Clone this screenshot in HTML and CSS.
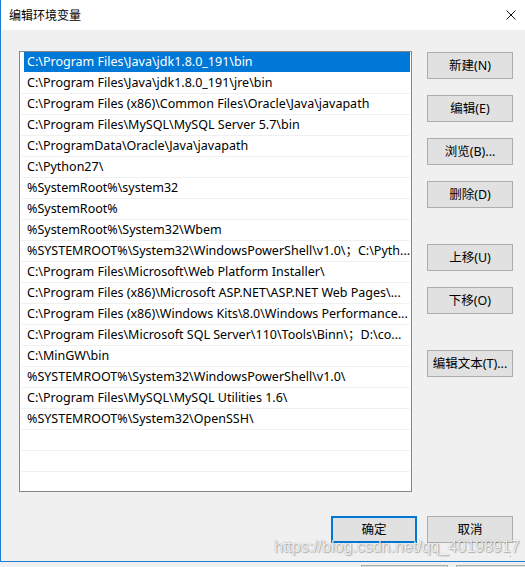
FILE: index.html
```html
<!DOCTYPE html>
<html lang="zh-CN">
<head>
<meta charset="utf-8">
<title>编辑环境变量</title>
<link rel="stylesheet" href="styles.css">
</head>
<body>
<div class="window">
  <div class="titlebar">
    <span class="title">编辑环境变量</span>
    <svg class="close" width="10" height="10" viewBox="0 0 10 10"><path d="M0.5 0.5L9.5 9.5M9.5 0.5L0.5 9.5" stroke="#111" stroke-width="1" fill="none"/></svg>
  </div>
  <div class="body">
    <div class="main">
      <div class="list">
        <div class="row sel">C:\Program Files\Java\jdk1.8.0_191\bin</div>
        <div class="row">C:\Program Files\Java\jdk1.8.0_191\jre\bin</div>
        <div class="row">C:\Program Files (x86)\Common Files\Oracle\Java\javapath</div>
        <div class="row">C:\Program Files\MySQL\MySQL Server 5.7\bin</div>
        <div class="row">C:\ProgramData\Oracle\Java\javapath</div>
        <div class="row">C:\Python27\</div>
        <div class="row">%SystemRoot%\system32</div>
        <div class="row">%SystemRoot%</div>
        <div class="row">%SystemRoot%\System32\Wbem</div>
        <div class="row">%SYSTEMROOT%\System32\WindowsPowerShell\v1.0\；C:\Pyth...</div>
        <div class="row">C:\Program Files\Microsoft\Web Platform Installer\</div>
        <div class="row">C:\Program Files (x86)\Microsoft ASP.NET\ASP.NET Web Pages\...</div>
        <div class="row">C:\Program Files (x86)\Windows Kits\8.0\Windows Performance...</div>
        <div class="row">C:\Program Files\Microsoft SQL Server\110\Tools\Binn\；D:\co...</div>
        <div class="row">C:\MinGW\bin</div>
        <div class="row">%SYSTEMROOT%\System32\WindowsPowerShell\v1.0\</div>
        <div class="row">C:\Program Files\MySQL\MySQL Utilities 1.6\</div>
        <div class="row">%SYSTEMROOT%\System32\OpenSSH\</div>
        <div class="row"></div>
        <div class="row"></div>
        <div class="row last"></div>
      </div>
      <div class="side">
        <div class="group">
          <button class="btn">新建(N)</button>
          <button class="btn">编辑(E)</button>
          <button class="btn">浏览(B)...</button>
          <button class="btn">删除(D)</button>
        </div>
        <div class="group">
          <button class="btn">上移(U)</button>
          <button class="btn">下移(O)</button>
        </div>
        <div class="group">
          <button class="btn">编辑文本(T)...</button>
        </div>
      </div>
    </div>
    <div class="footer">
      <button class="btn primary">确定</button>
      <button class="btn">取消</button>
    </div>
    <div class="watermark">https://blog.csdn.net/qq_40198917</div>
    <div class="grip"></div>
  </div>
</div>
<div class="behind">
  <div class="ghost g1"></div>
  <div class="ghost g2"></div>
</div>
</body>
</html>
```
FILE: styles.css
```css
html, body {
  margin: 0;
  padding: 0;
  background: #f0f0f0;
  overflow: hidden;
}
body {
  width: 525px;
  height: 567px;
  font-family: "Noto Sans", "Noto Sans CJK SC", sans-serif;
  font-size: 12px;
  color: #000;
}
.window {
  width: 524px;
  height: 561px;
  border-left: 1px solid #1a7fd4;
  border-bottom: 1px solid #1a7fd4;
  display: flex;
  flex-direction: column;
}
.titlebar {
  height: 30px;
  background: #fff;
  display: flex;
  align-items: center;
  padding-left: 8px;
  position: relative;
  box-sizing: border-box;
}
.title {
  font-family: "Noto Sans CJK SC", sans-serif;
  font-size: 12px;
  color: #000;
  line-height: 30px;
}
.close {
  position: absolute;
  left: 505px;
  top: 10px;
}
.body {
  flex: 1;
  background: #f0f0f0;
  position: relative;
  padding: 21px 0 0 18px;
  box-sizing: border-box;
}
.main {
  display: flex;
  gap: 15px;
}
.list {
  width: 390px;
  height: 439px;
  border: 1px solid #828790;
  background: #fff;
  overflow: hidden;
  padding-left: 1px;
  box-sizing: content-box;
}
.row {
  height: 20px;
  line-height: 20px;
  border-bottom: 1px solid #f0f0f0;
  margin-right: 1px;
  padding-left: 6px;
  white-space: nowrap;
  overflow: hidden;
  font-family: "Noto Sans", "Noto Sans CJK SC", sans-serif;
  font-size: 12.5px;
}
.row.sel {
  background: linear-gradient(to right, transparent 3px, #0078d7 3px);
  color: #fff;
  border-bottom-color: #fff;
}
.side {
  display: flex;
  flex-direction: column;
  gap: 36px;
  padding-top: 1px;
}
.group {
  display: flex;
  flex-direction: column;
  gap: 16px;
}
.btn {
  width: 86px;
  height: 27px;
  margin: 0;
  padding: 0;
  background: #e1e1e1;
  border: 1px solid #adadad;
  font-family: "Noto Sans", "Noto Sans CJK SC", sans-serif;
  font-size: 12.5px;
  color: #000;
  box-sizing: border-box;
  line-height: 25px;
}
.btn.primary {
  border: 2px solid #0078d7;
  line-height: 23px;
}
.footer {
  display: flex;
  gap: 10px;
  margin-top: 24px;
  margin-left: 312px;
}
.watermark {
  position: absolute;
  left: 273px;
  top: 508px;
  font-family: "Liberation Sans", Arial, sans-serif;
  font-size: 16px;
  color: rgba(255, 255, 255, 0.85);
  text-shadow: 0 0 1px rgba(0, 0, 0, 0.35), 1px 1px 1px rgba(0, 0, 0, 0.25);
  white-space: nowrap;
}
.grip {
  position: absolute;
  right: 12px;
  bottom: 2px;
  width: 7px;
  height: 7px;
  background:
    radial-gradient(circle, #9a9a9a 0.8px, transparent 1px) 0 0 / 3px 3px;
  clip-path: polygon(100% 0, 100% 100%, 0 100%);
}
.behind {
  position: relative;
  height: 5px;
  background: #f0f0f0;
}
.ghost {
  position: absolute;
  top: 3px;
  height: 4px;
  background: #e1e1e1;
  border: 1px solid #adadad;
  border-bottom: none;
}
.g1 { left: 361px; width: 85px; }
.g2 { left: 456px; width: 85px; }
```
